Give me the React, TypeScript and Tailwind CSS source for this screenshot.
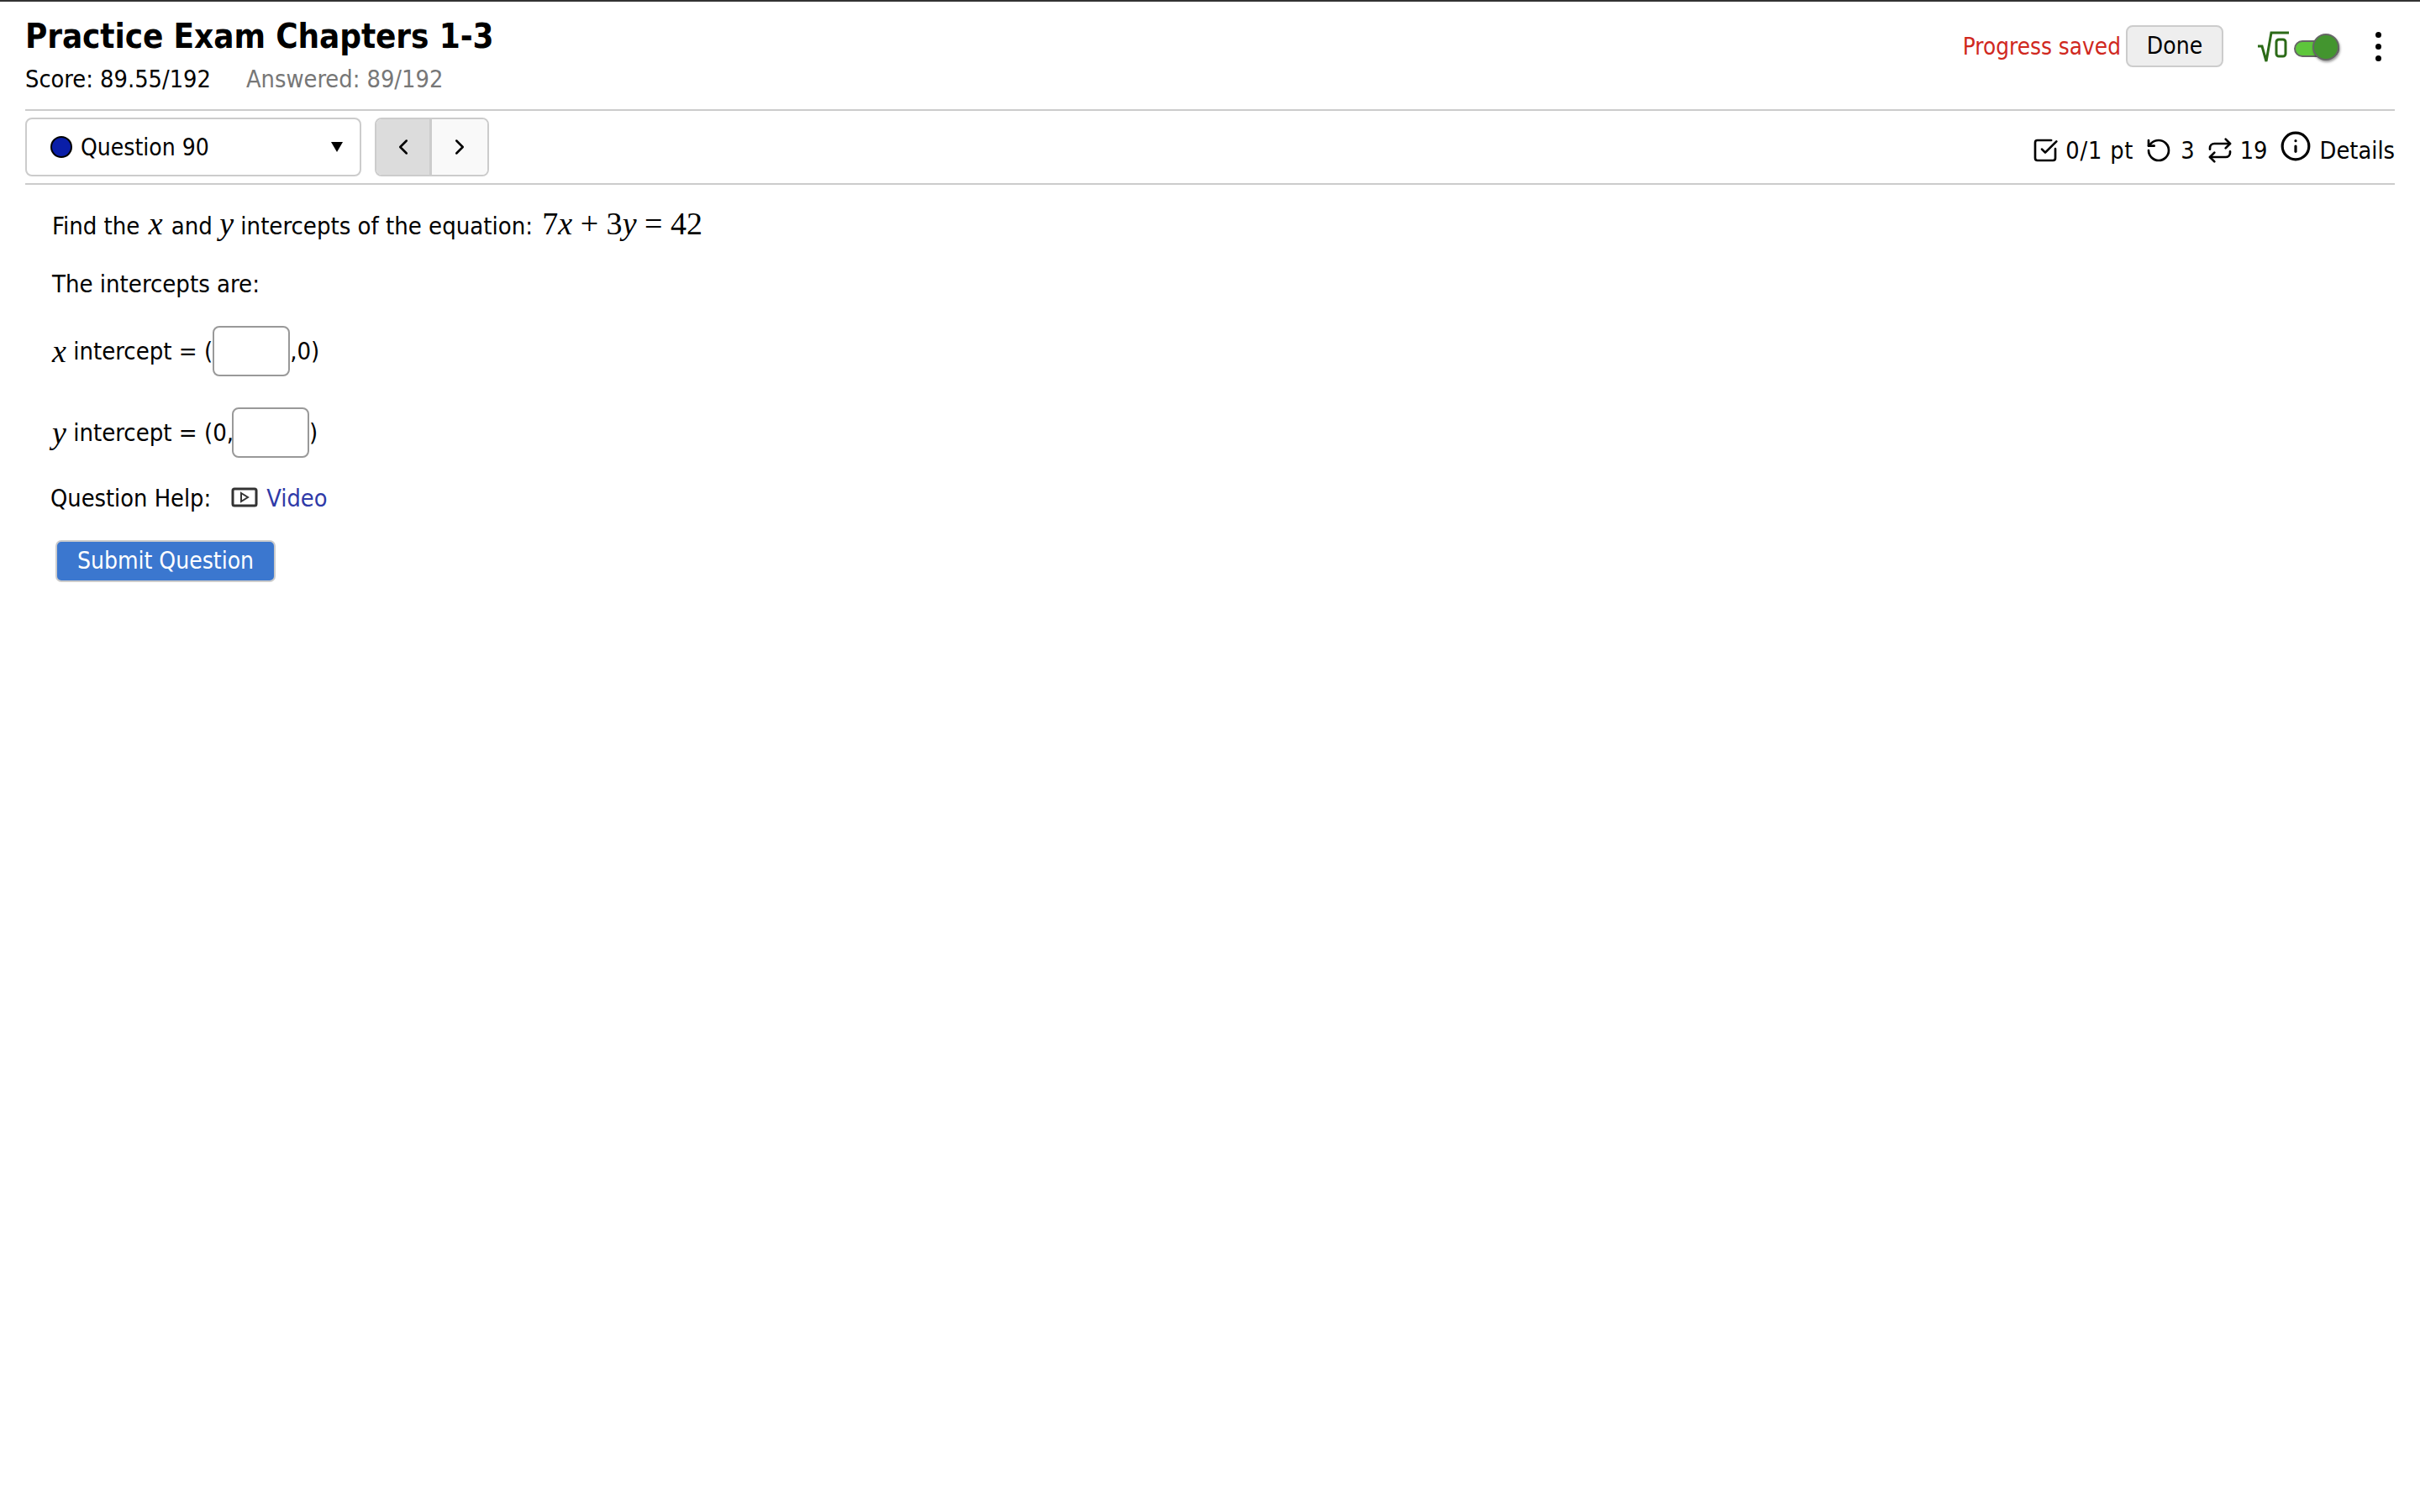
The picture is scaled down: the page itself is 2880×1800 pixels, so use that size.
import { ChevronLeft, ChevronRight, Info, Repeat, RotateCcw, SquareCheckBig } from 'lucide-react';

const sans = { fontStretch: 'condensed' } as const;

function MathVar({ children }: { children: string }) {
  return <span className="font-['Liberation_Serif',serif] italic text-[38px] leading-none">{children}</span>;
}

function Blank() {
  return <span className="inline-block w-[92px] h-[60px] border-2 border-[#999] rounded-[8px] bg-white align-middle" />;
}

export default function App() {
  return (
    <div className="w-[2880px] h-[1800px] bg-white text-black border-t-2 border-[#333] font-['DejaVu_Sans',sans-serif] text-[29px] leading-none" style={sans}>
      <div className="px-[30px]">
        {/* Header */}
        <div className="flex justify-between h-[128px]">
          <div>
            <h1 className="text-[40px] font-bold mt-[18px] leading-[46px] tracking-[-0.1px]">Practice Exam Chapters 1-3</h1>
            <div className="mt-[11px] flex gap-[42px] text-[28.7px] leading-[34px]">
              <span>Score: 89.55/192</span>
              <span className="text-[#777]">Answered: 89/192</span>
            </div>
          </div>
          <div className="flex items-start pt-[28px] pr-[16px]">
            <span className="text-[#d0281e] mt-[12px] mr-[6px] text-[27.7px]">Progress saved</span>
            <button className="h-[50px] w-[116px] bg-[#eee] border-2 border-[#ccc] rounded-[8px] text-[28px]">Done</button>
            <svg className="ml-[40px] mt-[7px]" width="38" height="38" viewBox="0 0 38 38" fill="none" stroke="#2b6a17" strokeWidth="3">
              <path d="M1 18h5l5 18L17 2h21" />
              <rect x="23" y="10" width="11" height="20" rx="3" />
            </svg>
            <div className="relative ml-[6px] mt-[18px] w-[54px] h-[20px] rounded-full bg-[#5ec63c] border-2 border-[#666]">
              <span className="absolute right-[-2px] top-[-10px] w-[32px] h-[32px] rounded-full bg-[#43952f] border-2 border-[#666] shadow-[1px_2px_3px_rgba(0,0,0,0.4)]" />
            </div>
            <div className="ml-[43px] mt-[8px] flex flex-col gap-[7px]">
              <span className="w-[7px] h-[7px] rounded-full bg-black" />
              <span className="w-[7px] h-[7px] rounded-full bg-black" />
              <span className="w-[7px] h-[7px] rounded-full bg-black" />
            </div>
          </div>
        </div>

        {/* Nav */}
        <div className="flex justify-between border-y-2 border-[#ccc] h-[90px] py-[8px]">
          <div className="flex">
            <div className="flex items-center w-[400px] h-[70px] border-2 border-[#ccc] rounded-[8px] pl-[28px] pr-[20px]">
              <span className="w-[26px] h-[26px] rounded-full bg-[#0a1ea8] border-2 border-black" />
              <span className="ml-[10px] text-[28px] mt-[1px]">Question 90</span>
              <span className="ml-auto w-0 h-0 border-x-[7px] border-x-transparent border-t-[12px] border-t-black" />
            </div>
            <div className="flex ml-[16px] h-[70px] border-2 border-[#ccc] rounded-[8px] overflow-hidden">
              <button className="w-[66px] flex items-center justify-center bg-[#dcdcdc] border-r-[3px] border-[#ccc]"><ChevronLeft size={30} /></button>
              <button className="w-[66px] flex items-center justify-center bg-[#f9f9f9]"><ChevronRight size={30} /></button>
            </div>
          </div>
          <div className="flex items-center text-[28.7px] pt-[8px]">
            <SquareCheckBig size={32} strokeWidth={2} />
            <span className="ml-[8px] tracking-[0.8px]">0/1 pt</span>
            <RotateCcw className="ml-[14px]" size={32} strokeWidth={2} />
            <span className="ml-[10px]">3</span>
            <Repeat className="ml-[14px]" size={32} strokeWidth={2} />
            <span className="ml-[8px]">19</span>
            <Info className="ml-[14px] mb-[10px]" size={38} strokeWidth={2} />
            <span className="ml-[10px]">Details</span>
          </div>
        </div>

        {/* Question */}
        <div className="pl-[32px] text-[29px]">
          <p className="mt-[27px] leading-[40px]">
            Find the <span className="ml-[2px]"><MathVar>x</MathVar></span><span className="ml-[2px]"> and </span><MathVar>y</MathVar> intercepts of the equation: <span className="ml-[3px] font-['Liberation_Serif',serif] text-[38px] leading-none">7<i>x</i> + 3<i>y</i> = 42</span>
          </p>
          <p className="mt-[29px] leading-[40px]">The intercepts are:</p>
          <p className="mt-[29px] flex items-center h-[62px]">
            <MathVar>x</MathVar>&nbsp;intercept = (<Blank />,0)
          </p>
          <p className="mt-[35px] flex items-center h-[62px]">
            <MathVar>y</MathVar>&nbsp;<span className="-mr-[2px]">intercept = (0,</span><Blank />)
          </p>
          <div className="mt-[29px] flex items-center h-[36px] -ml-[2px] text-[28.7px]">
            <span>Question Help:</span>
            <svg className="ml-[24px]" width="32" height="26" viewBox="0 0 32 26" fill="none" stroke="#333" strokeWidth="3">
              <rect x="2" y="2" width="28" height="20" rx="2" />
              <path d="M12 7l8 5-8 5z" strokeWidth="2" />
            </svg>
            <span className="ml-[10px] text-[#2f3aa8]">Video</span>
          </div>
          <button className="mt-[32px] ml-[4px] h-[50px] w-[262px] rounded-[7px] bg-[#3b77cf] border-2 border-[#ccc] text-white text-[28px]">Submit Question</button>
        </div>
      </div>
    </div>
  );
}
